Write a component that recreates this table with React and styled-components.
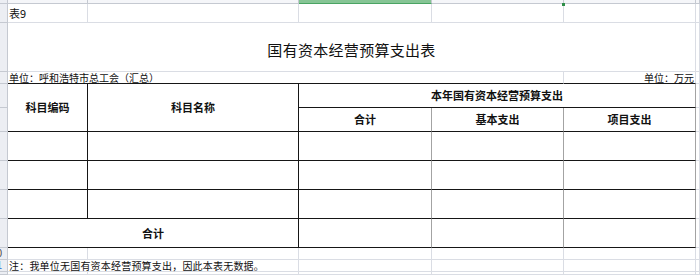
import React from 'react';
import styled, { createGlobalStyle } from 'styled-components';

// sheet colours
const GRID = '#dadde4';
const DARK = '#161616';
const MID = '#a3a3a3';
const HEAD = '#c5c9d1';

const GlobalStyle = createGlobalStyle`
  html, body {
    margin: 0;
    padding: 0;
    background: #fff;
  }
  body {
    font-family: 'Noto Sans CJK SC', 'Noto Sans', sans-serif;
    color: #111;
    overflow: hidden;
  }
`;

const Sheet = styled.div`
  position: relative;
  width: 700px;
  height: 275px;
  overflow: hidden;
  display: grid;
  grid-template-columns: 8px 80px 211px 133px 132px 132px 1fr;
  grid-template-rows: 4px 19px 49px 12px 24px 24px 29px 29px 29px 29px 12px 12px 1fr;
`;

const ColHead = styled.div`
  grid-column: ${(p) => p.$col};
  grid-row: 1;
  box-sizing: border-box;
  background: ${(p) => (p.$active ? '#86c595' : '#f5f6f9')};
  border-right: 1px solid ${HEAD};
  border-bottom: 1px solid ${(p) => (p.$active ? '#4aa463' : HEAD)};
`;

const Gutter = styled.div`
  grid-column: 1;
  grid-row: ${(p) => p.$row};
  box-sizing: border-box;
  background: #eceef3;
  border-right: 1px solid ${HEAD};
  border-bottom: 1px solid ${HEAD};
  overflow: hidden;
  display: flex;
  justify-content: flex-end;
  align-items: center;
  padding-right: 5px;
  font-family: 'Liberation Sans', sans-serif;
  font-size: 10px;
  line-height: 1;
  color: ${(p) => (p.$active ? '#2a6bd1' : '#444')};
`;

const Cell = styled.div`
  grid-column: ${(p) => p.$col};
  grid-row: ${(p) => p.$row};
  box-sizing: border-box;
  min-width: 0;
  display: flex;
  align-items: center;
  justify-content: ${(p) =>
    p.$align === 'left' ? 'flex-start' : p.$align === 'right' ? 'flex-end' : 'center'};
  padding: ${(p) => p.$pt || 0}px ${(p) => p.$pr || 0}px 0 ${(p) => p.$pl || 0}px;
  border-right: 1px solid ${(p) => p.$right || GRID};
  border-bottom: 1px solid ${(p) => p.$bottom || GRID};
  font-size: ${(p) => p.$size || 11}px;
  font-weight: ${(p) => (p.$bold ? 700 : 400)};
  letter-spacing: ${(p) => p.$ls || 0}px;
  white-space: nowrap;
  line-height: 1;
`;

const FillHandle = styled.div`
  position: absolute;
  left: 562px;
  top: 3px;
  width: 3px;
  height: 3px;
  background: #2f8f48;
`;

const cols = [2, 3, 4, 5, 6, 7];
const dataRows = [7, 8, 9];

export default function App() {
  return (
    <>
      <GlobalStyle />
      <Sheet>
        {/* column header strip, cut off at the top */}
        <Gutter $row={1} />
        {cols.map((c) => (
          <ColHead key={c} $col={c} $active={c === 4} />
        ))}

        {/* row header gutter */}
        {Array.from({ length: 12 }, (_, i) => i + 2).map((r) => (
          <Gutter key={r} $row={r} $active={r === 12}>
            {r === 11 ? '10' : r === 12 ? '11' : ''}
          </Gutter>
        ))}

        {/* row 1 */}
        <Cell $col={2} $row={2} $align="left" $pl={1}>表9</Cell>
        {[3, 4, 5, 6, 7].map((c) => (
          <Cell key={c} $col={c} $row={2} />
        ))}

        {/* title */}
        <Cell $col="2 / 7" $row={3} $size={15} $ls={0.3} $pt={4}>
          国有资本经营预算支出表
        </Cell>
        <Cell $col={7} $row={3} />

        {/* unit line */}
        <Cell $col="2 / 6" $row={4} $align="left" $pl={1} $size={10} $bottom={DARK}>
          单位：呼和浩特市总工会（汇总）
        </Cell>
        <Cell $col={6} $row={4} $align="right" $pr={1} $size={10} $bottom={DARK}>
          单位：万元
        </Cell>
        <Cell $col={7} $row={4} />

        {/* table head */}
        <Cell $col={2} $row="5 / 7" $bold $right={DARK} $bottom={DARK}>科目编码</Cell>
        <Cell $col={3} $row="5 / 7" $bold $right={DARK} $bottom={DARK}>科目名称</Cell>
        <Cell $col="4 / 7" $row={5} $bold $right={MID} $bottom={DARK}>本年国有资本经营预算支出</Cell>
        <Cell $col={7} $row={5} />
        <Cell $col={4} $row={6} $bold $right={MID} $bottom={DARK}>合计</Cell>
        <Cell $col={5} $row={6} $bold $right={MID} $bottom={DARK}>基本支出</Cell>
        <Cell $col={6} $row={6} $bold $right={MID} $bottom={DARK}>项目支出</Cell>
        <Cell $col={7} $row={6} />

        {/* empty data rows */}
        {dataRows.map((r) => (
          <React.Fragment key={r}>
            <Cell $col={2} $row={r} $right={DARK} $bottom={DARK} />
            <Cell $col={3} $row={r} $right={DARK} $bottom={DARK} />
            <Cell $col={4} $row={r} $right={MID} $bottom={DARK} />
            <Cell $col={5} $row={r} $right={MID} $bottom={DARK} />
            <Cell $col={6} $row={r} $right={MID} $bottom={DARK} />
            <Cell $col={7} $row={r} />
          </React.Fragment>
        ))}

        {/* total */}
        <Cell $col="2 / 4" $row={10} $bold $right={DARK} $bottom={DARK}>合计</Cell>
        <Cell $col={4} $row={10} $right={MID} $bottom={DARK} />
        <Cell $col={5} $row={10} $right={MID} $bottom={DARK} />
        <Cell $col={6} $row={10} $right={MID} $bottom={DARK} />
        <Cell $col={7} $row={10} />

        {/* below the table */}
        {cols.map((c) => (
          <Cell key={c} $col={c} $row={11} />
        ))}
        <Cell $col="2 / 4" $row={12} $align="left" $pl={1} $size={10} $ls={0.2}>
          注：我单位无国有资本经营预算支出，因此本表无数据。
        </Cell>
        {[4, 5, 6, 7].map((c) => (
          <Cell key={c} $col={c} $row={12} />
        ))}
        {cols.map((c) => (
          <Cell key={c} $col={c} $row={13} />
        ))}

        <FillHandle />
      </Sheet>
    </>
  );
}
